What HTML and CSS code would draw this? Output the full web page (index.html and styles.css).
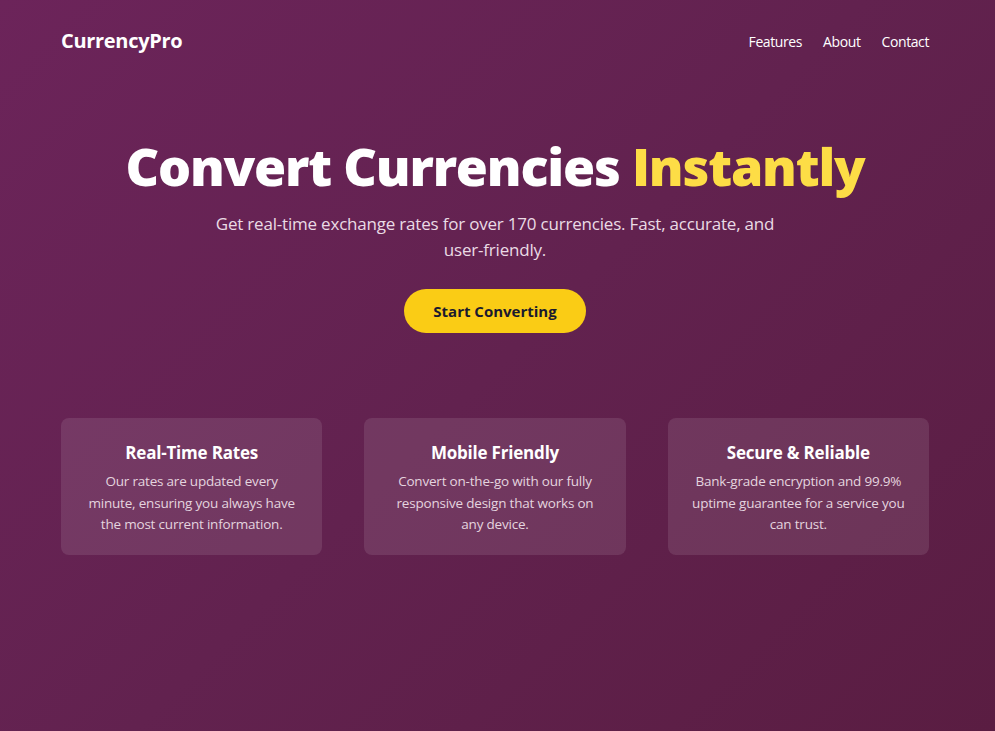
FILE: index.html
```html
<!DOCTYPE html>
<html lang="en">
<head>
<meta charset="utf-8">
<title>CurrencyPro</title>
<link rel="stylesheet" href="styles.css">
</head>
<body>
<div class="page">
  <nav class="nav">
    <div class="logo">CurrencyPro</div>
    <ul class="links">
      <li><a href="#">Features</a></li>
      <li><a href="#">About</a></li>
      <li><a href="#">Contact</a></li>
    </ul>
  </nav>
  <section class="hero">
    <h1 class="title">Convert Currencies <span class="accent">Instantly</span></h1>
    <p class="lead">Get real-time exchange rates for over 170 currencies. Fast, accurate, and user-friendly.</p>
    <a class="cta" href="#">Start Converting</a>
  </section>
  <section class="cards">
    <div class="card">
      <h3 class="card-title">Real-Time Rates</h3>
      <p class="card-text">Our rates are updated every minute, ensuring you always have the most current information.</p>
    </div>
    <div class="card">
      <h3 class="card-title">Mobile Friendly</h3>
      <p class="card-text">Convert on-the-go with our fully responsive design that works on any device.</p>
    </div>
    <div class="card">
      <h3 class="card-title">Secure &amp; Reliable</h3>
      <p class="card-text">Bank-grade encryption and 99.9% uptime guarantee for a service you can trust.</p>
    </div>
  </section>
</div>
</body>
</html>
```
FILE: styles.css
```css
* { box-sizing: border-box; }
html, body { margin: 0; padding: 0; }
body {
  min-height: 731px;
  background: linear-gradient(135deg, #6c245a 0%, #62224f 50%, #5a1d42 100%);
  font-family: "Open Sans", "Noto Sans", sans-serif;
  color: #fff;
}
.page {
  width: 990px;
  padding: 0 61px;
}
.nav {
  display: flex;
  justify-content: space-between;
  align-items: center;
  padding-top: 25px;
  height: 56px;
}
.logo {
  font-size: 20px;
  font-weight: 700;
  letter-spacing: -0.3px;
}
.links {
  list-style: none;
  margin: 0;
  padding: 0;
  display: flex;
  gap: 21px;
}
.links a {
  color: #fff;
  text-decoration: none;
  font-size: 14px;
  letter-spacing: -0.4px;
}
.hero {
  text-align: center;
  margin-top: 78px;
}
.title {
  margin: 0;
  font-size: 52px;
  line-height: 64px;
  font-weight: 800;
  letter-spacing: -1.2px;
}
.accent { color: #fddd46; }
.lead {
  max-width: 580px;
  margin: 13px auto 0;
  font-size: 17px;
  line-height: 26px;
  letter-spacing: -0.2px;
  color: #eadbe5;
}
.cta {
  display: inline-block;
  margin-top: 26px;
  padding: 12px 29px;
  border-radius: 999px;
  background: #facc15;
  color: #1a1a2e;
  font-weight: 700;
  font-size: 15px;
  line-height: 20px;
  text-decoration: none;
}
.cards {
  display: grid;
  grid-template-columns: repeat(3, 1fr);
  gap: 42px;
  margin-top: 85px;
}
.card {
  background: rgba(255, 255, 255, 0.1);
  border-radius: 8px;
  padding: 21px 20px 19px;
  text-align: center;
}
.card-title {
  margin: 0 0 4px;
  font-size: 17px;
  line-height: 28px;
  font-weight: 700;
  letter-spacing: -0.2px;
}
.card-text {
  margin: 0;
  font-size: 13.5px;
  line-height: 21.5px;
  letter-spacing: -0.2px;
  color: #e4d4df;
}
```
